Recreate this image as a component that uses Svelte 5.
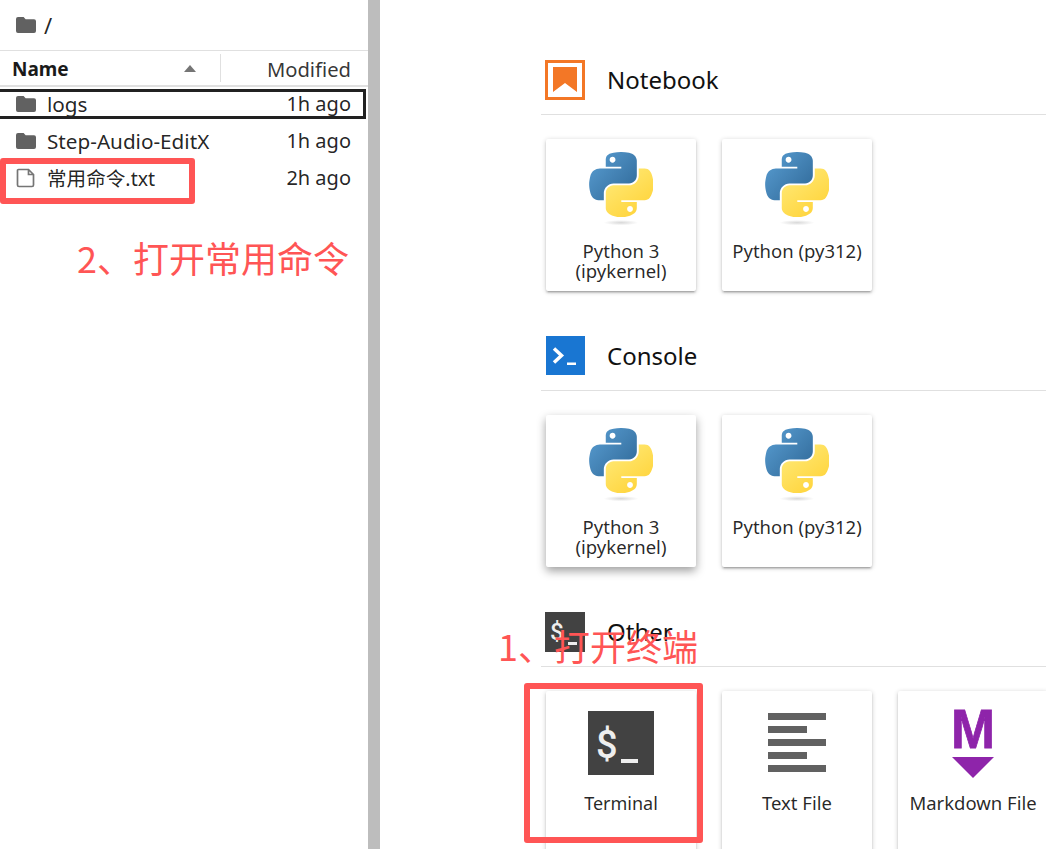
<script>
  const files = [
    { name: 'logs', time: '1h ago', kind: 'folder', selected: true },
    { name: 'Step-Audio-EditX', time: '1h ago', kind: 'folder' },
    { name: '常用命令.txt', time: '2h ago', kind: 'file' }
  ];
  const bars = [58, 39, 58, 39, 58];
</script>

{#snippet folder()}
  <svg class="folder" viewBox="0 0 20 16" width="20" height="16"><path d="M2 0h5.6l2 2.2H18a2 2 0 0 1 2 2V14a2 2 0 0 1-2 2H2a2 2 0 0 1-2-2V2a2 2 0 0 1 2-2z" fill="#616161"/></svg>
{/snippet}

{#snippet py()}
  <svg class="py" viewBox="0 0 110 126" width="64" height="73">
    <path fill="url(#pyBlue)" d="M54.92 0c-4.59.02-8.96.41-12.81 1.09C30.76 3.1 28.7 7.3 28.7 15.03v10.22h26.81v3.41H18.64c-7.79 0-14.62 4.68-16.75 13.59-2.46 10.21-2.57 16.59 0 27.25 1.9 7.94 6.46 13.6 14.25 13.6h9.22v-12.25c0-8.85 7.66-16.66 16.75-16.66h26.78c7.45 0 13.41-6.14 13.41-13.63V15.03c0-7.27-6.13-12.72-13.41-13.94C64.28.33 59.5-.02 54.92 0zm-14.5 8.22c2.77 0 5.03 2.3 5.03 5.12 0 2.82-2.26 5.1-5.03 5.1-2.78 0-5.03-2.28-5.03-5.1 0-2.82 2.25-5.12 5.03-5.12z"/>
    <path fill="url(#pyYellow)" d="M85.64 28.66v11.9c0 9.24-7.83 17-16.75 17H42.1c-7.33 0-13.4 6.28-13.4 13.63v25.53c0 7.27 6.31 11.54 13.4 13.63 8.49 2.5 16.63 2.95 26.79 0 6.75-1.95 13.4-5.89 13.4-13.63V86.5H55.51v-3.4h40.19c7.79 0 10.7-5.44 13.4-13.6 2.8-8.4 2.74-16.48 0-27.25-1.92-7.76-5.6-13.6-13.4-13.6zM70.57 93.31c2.78 0 5.04 2.28 5.04 5.1 0 2.82-2.26 5.12-5.04 5.12-2.77 0-5.03-2.3-5.03-5.12 0-2.82 2.26-5.1 5.03-5.1z"/>
    <ellipse cx="55" cy="122" rx="30" ry="4.5" fill="url(#pyShadow)"/>
  </svg>
{/snippet}

{#snippet card(label, selectedShadow)}
  <div class="card" class:hover={selectedShadow}>
    <div class="art">{@render py()}</div>
    <div class="label">{label}</div>
  </div>
{/snippet}

<svg class="defs" width="0" height="0" aria-hidden="true">
  <defs>
    <linearGradient id="pyBlue" x1="0" y1="0" x2="1" y2="0.9"><stop offset="0" stop-color="#5a9fd4"/><stop offset="1" stop-color="#306998"/></linearGradient>
    <linearGradient id="pyYellow" x1="0.2" y1="0.1" x2="0.8" y2="0.9"><stop offset="0" stop-color="#ffe873"/><stop offset="1" stop-color="#ffd43b"/></linearGradient>
    <radialGradient id="pyShadow"><stop offset="0" stop-color="#b8b8b8" stop-opacity=".55"/><stop offset="1" stop-color="#b8b8b8" stop-opacity="0"/></radialGradient>
  </defs>
</svg>

<div class="app">
  <aside class="side">
    <div class="crumbs">{@render folder()}<span class="slash">/</span></div>
    <div class="thead">
      <div class="th-name"><span class="name-t">Name</span><svg class="caret" width="12" height="7" viewBox="0 0 12 7"><path d="M6 0l6 7H0z" fill="#757575"/></svg></div>
      <div class="th-mod">Modified</div>
    </div>
    <div class="rows">
      {#each files as f}
        <div class="row" class:selected={f.selected}>
          <span class="ico">
            {#if f.kind === 'folder'}
              {@render folder()}
            {:else}
              <svg width="20" height="20" viewBox="0 0 20 20"><path d="M2.500 1.500h10l5 5v10.500a1.500 1.500 0 0 1-1.500 1.500H3a1.500 1.500 0 0 1-1.500-1.500V2.500a1 1 0 0 1 1-1z M12.500 1.500v5h5" fill="none" stroke="#757575" stroke-width="1.700"/></svg>
            {/if}
          </span>
          <span class="fname" class:cjk={f.kind === 'file'}>{f.name}</span>
          <span class="ftime">{f.time}</span>
        </div>
      {/each}
    </div>
  </aside>
  <div class="gutter"></div>
  <main class="main">
    <section>
      <header>
        <svg class="hicon" width="40" height="40" viewBox="0 0 40 40"><rect x="1.500" y="1.500" width="37" height="37" fill="#fff" stroke="#f37726" stroke-width="3"/><path d="M8 7h24v25l-12-9-12 9z" fill="#f37726"/></svg>
        <h2>Notebook</h2>
      </header>
      <div class="cards">
        {@render card('Python 3 (ipykernel)')}
        {@render card('Python (py312)')}
      </div>
    </section>
    <section>
      <header>
        <svg class="hicon" width="40" height="40" viewBox="0 0 40 40"><rect x="1" width="39" height="39" fill="#1976d2"/><path d="M9 12.500l7.500 7-7.500 7" fill="none" stroke="#fff" stroke-width="3.500"/><rect x="22" y="26.500" width="9" height="2.500" fill="#fff"/></svg>
        <h2>Console</h2>
      </header>
      <div class="cards">
        {@render card('Python 3 (ipykernel)', true)}
        {@render card('Python (py312)')}
      </div>
    </section>
    <section>
      <header>
        <svg class="hicon" width="40" height="40" viewBox="0 0 40 40"><rect width="40" height="40" fill="#424242"/><text x="5" y="28" class="dollar small">$</text><rect x="23" y="30" width="9" height="3" fill="#eee"/></svg>
        <h2>Other</h2>
      </header>
      <div class="cards tall">
        <div class="card">
          <div class="art">
            <svg class="term" width="66" height="64" viewBox="0 0 66 64"><rect width="66" height="64" fill="#424242"/><text x="8" y="47" class="dollar">$</text><rect x="33" y="48" width="17" height="4" fill="#eee"/></svg>
          </div>
          <div class="label short">Terminal</div>
        </div>
        <div class="card">
          <div class="art">
            <div class="bars">
              {#each bars as w}<i style="width:{w}px"></i>{/each}
            </div>
          </div>
          <div class="label">Text File</div>
        </div>
        <div class="card">
          <div class="art">
            <svg width="46" height="72" viewBox="0 0 46 72" class="md"><text x="23" y="41" class="mtext" textLength="44" lengthAdjust="spacingAndGlyphs">M</text><path d="M2 50h42L23 71z" fill="#8e24aa"/></svg>
          </div>
          <div class="label nowrap">Markdown File</div>
        </div>
      </div>
    </section>
  </main>

  <div class="note n2">2、打开常用命令</div>
  <div class="note n1">1、打开终端</div>
  <div class="mark m-file"></div>
  <div class="mark m-term"></div>
</div>

<style>
  :global(html), :global(body) { margin: 0; overflow: hidden; background: #fff; }
  .defs { position: absolute; }
  .app {
    position: relative;
    display: flex;
    width: 1046px;
    height: 849px;
    overflow: hidden;
    font-family: "Noto Sans", "Noto Sans CJK SC", sans-serif;
    color: rgba(0, 0, 0, .87);
  }
  .side { width: 368px; flex: none; box-sizing: border-box; }
  .gutter { width: 12px; flex: none; background: #bdbdbd; }
  .main { flex: 1; min-width: 0; padding: 60px 0 0 161px; }

  .crumbs { box-sizing: border-box; display: flex; align-items: center; gap: 8px; padding-left: 16px; border-bottom: 1px solid #e0e0e0; height: 51px; }
  .slash { font-size: 22px; }
  .folder { display: block; }
  .thead { height: 34px; display: flex; align-items: center; border-bottom: 2px solid #e0e0e0; font-size: 20.200px; }
  .th-name { width: 221px; box-sizing: border-box; height: 28px; display: flex; align-items: center; justify-content: space-between; padding: 0 24px 0 12px; border-right: 1px solid #e0e0e0; font-weight: 700; color: #1a1a1a; }
  .name-t { font-size: 19px; position: relative; top: 1px; }
  .caret { display: block; }
  .th-mod { flex: 1; text-align: right; padding-right: 17px; color: rgba(0,0,0,.8); position: relative; top: 1px; }

  .rows { margin-top: -2px; }
  .row { height: 37px; display: flex; align-items: center; font-size: 20.700px; box-sizing: border-box; padding: 0 17px 0 16px; position: relative; }
  .ico { width: 31px; flex: none; display: flex; align-items: center; }
  .ico svg { display: block; }
  .fname { flex: 1; white-space: nowrap; }
  .fname.cjk { font-size: 19.600px; }
  .ftime { white-space: nowrap; font-size: 20px; }
  .row.selected::after { content: ""; position: absolute; left: -4px; right: 2px; top: 4px; height: 30px; box-sizing: border-box; border: 3px solid #212121; }

  section { margin-bottom: 45px; }
  header { height: 54px; display: flex; align-items: flex-start; border-bottom: 1px solid #e0e0e0; padding-left: 4px; }
  .hicon { display: block; flex: none; }
  h2 { margin: 0 0 0 22px; font-size: 24px; font-weight: 400; line-height: 40px; color: #111; }
  .cards { display: flex; gap: 26px; padding: 24px 0 0 5px; }
  .card { width: 150px; height: 152px; flex: none; background: #fff; border-radius: 2px; box-shadow: 0 1px 5px rgba(0,0,0,.2), 0 2px 2px rgba(0,0,0,.14), 0 3px 1px -2px rgba(0,0,0,.12); text-align: center; display: flex; flex-direction: column; align-items: center; }
  .tall .card { height: 180px; }
  .card.hover { box-shadow: 0 4px 10px rgba(0,0,0,.38); }
  .art { height: 100px; padding-top: 13px; box-sizing: border-box; display: flex; justify-content: center; width: 100%; }
  .art + .label { margin-top: 2px; }
  .py { display: block; }
  .label { font-size: 18.500px; line-height: 20px; width: 140px; color: rgba(0,0,0,.85); }
  .label.short { font-size: 18px; }
  .label.nowrap { white-space: nowrap; width: auto; }
  .art svg { display: block; }
  .term { margin-top: 7px; }
  .dollar { font-family: Roboto, sans-serif; font-size: 38px; font-weight: 500; fill: #eee; }
  .dollar.small { font-size: 24px; }
  .bars { display: flex; flex-direction: column; gap: 6.500px; padding-top: 9px; width: 58px; }
  .bars i { display: block; height: 6.500px; background: #616161; }
  .md { margin-top: 3px; overflow: visible; }
  .mtext { font-family: "Liberation Sans", sans-serif; font-weight: 700; font-size: 56px; fill: #8e24aa; text-anchor: middle; stroke: #8e24aa; stroke-width: .8px; }

  .note { position: absolute; color: #ff5555; white-space: nowrap; font-family: "Noto Sans CJK SC", "Noto Sans", sans-serif; line-height: 1; }
  .n2 { left: 77px; top: 239px; font-size: 36px; }
  .n1 { left: 498px; top: 627px; font-size: 36px; }
  .mark { position: absolute; box-sizing: border-box; border: 6px solid #ff5555; border-radius: 3px; }
  .m-file { left: 0; top: 158px; width: 195px; height: 46px; }
  .m-term { left: 524px; top: 683px; width: 179px; height: 160px; }
</style>
